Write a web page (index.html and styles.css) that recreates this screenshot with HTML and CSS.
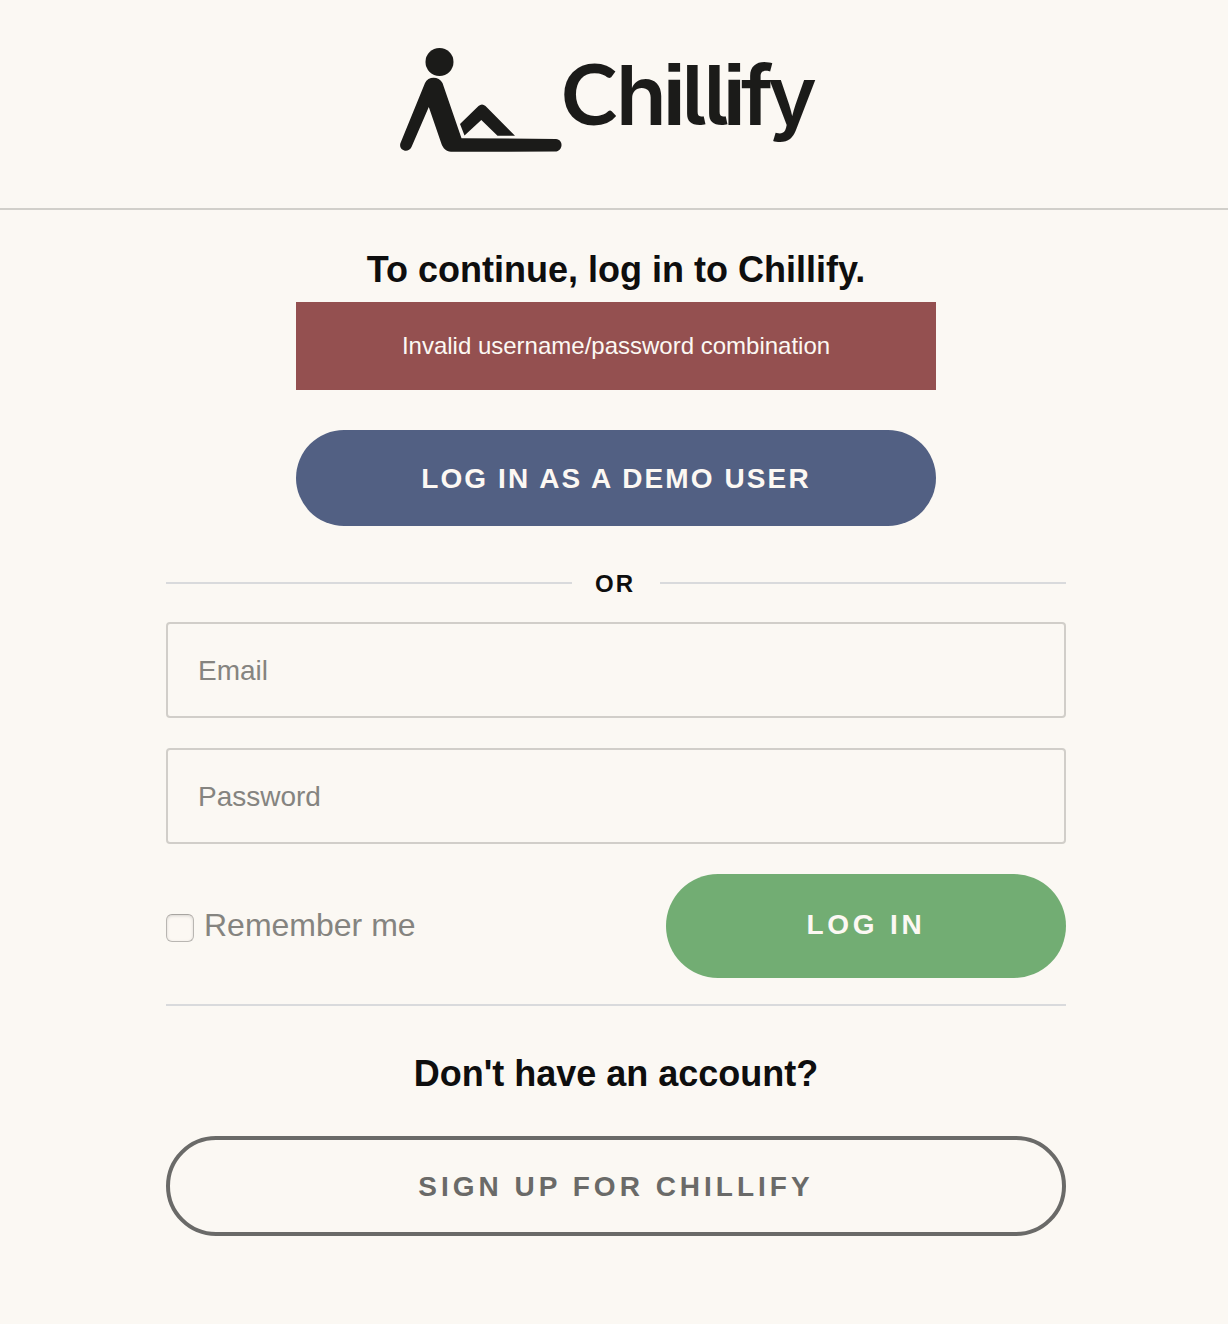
FILE: index.html
```html
<!DOCTYPE html>
<html lang="en">
<head>
<meta charset="utf-8">
<title>Log in - Chillify</title>
<link rel="stylesheet" href="styles.css">
</head>
<body>
<header class="header">
  <svg class="logo" width="432" height="120" viewBox="390 40 432 120" role="img" aria-label="Chillify">
    <circle cx="439.5" cy="62" r="14"/>
    <path d="M425 83C428 76 439 76 442.500 83L461.500 138.200L556 139C564 140 563 151 555 151.500L451 151.800C446 151.500 443 148 441.500 144L428.800 107L411.500 147C408 154 398 150 400.500 143Z"/>
    <path d="M460 124L478.500 106Q482 103 485.500 106L515 135.800H497.500L481.300 120L464.500 135.500Z"/>
    <text class="wordmark" y="125" x="561 616 662.500 681.500 703.500 722.500 741 768"><tspan class="wordmark-initial">C</tspan>h<tspan class="wordmark-i">i</tspan>ll<tspan class="wordmark-i">i</tspan>fy</text>
  </svg>
</header>
<main class="content">
  <h1 class="title">To continue, log in to Chillify.</h1>
  <div class="alert">Invalid username/password combination</div>
  <button class="button button-demo" type="button">LOG IN AS A DEMO USER</button>
  <div class="divider"><span class="divider-text">OR</span></div>
  <form class="form">
    <input class="field" type="email" placeholder="Email">
    <input class="field" type="password" placeholder="Password">
    <div class="actions">
      <label class="remember"><input class="checkbox" type="checkbox"><span class="remember-text">Remember me</span></label>
      <button class="button button-login" type="button">LOG IN</button>
    </div>
  </form>
  <h2 class="title signup-title">Don't have an account?</h2>
  <button class="button button-signup" type="button">SIGN UP FOR CHILLIFY</button>
</main>
</body>
</html>
```
FILE: styles.css
```css
* { box-sizing: border-box; }

body {
  margin: 0;
  min-height: 1324px;
  background: #fbf8f3;
  color: #0e0e0e;
  font-family: "Liberation Sans", Arial, sans-serif;
}

.header {
  height: 210px;
  padding: 40px 0 0 390px;
  border-bottom: 2px solid #d1cfca;
}

.logo { display: block; fill: #1b1b19; }

.wordmark {
  font-family: Inter, sans-serif;
  font-size: 83px;
  font-weight: 600;
  font-feature-settings: "cv05", "liga" 0, "calt" 0;
}

.wordmark-initial {
  font-family: Lato, sans-serif;
  font-size: 85px;
  font-weight: 700;
}

.wordmark-i {
  font-family: "Liberation Sans", Arial, sans-serif;
  font-size: 85px;
  font-weight: 700;
}

.content {
  display: flex;
  flex-direction: column;
  align-items: center;
  width: 900px;
  margin-left: 166px;
  padding-top: 38px;
}

.title {
  margin: 0;
  font-size: 36px;
  line-height: 44px;
}

.alert {
  width: 640px;
  margin-top: 10px;
  background: #945050;
  color: #fcf8f3;
  font-size: 24px;
  line-height: 88px;
  text-align: center;
}

.button {
  border: 0;
  padding: 0;
  border-radius: 52px;
  color: #fcf8f3;
  font: bold 28px/32px "Liberation Sans", Arial, sans-serif;
  letter-spacing: 4px;
}

.button-demo {
  width: 640px;
  height: 96px;
  margin-top: 40px;
  padding-top: 2px;
  background: #526083;
  letter-spacing: 2.1px;
}

.divider {
  display: flex;
  align-items: center;
  width: 100%;
  height: 28px;
  margin-top: 43px;
}

.divider::before,
.divider::after {
  content: "";
  flex: 1;
  height: 2px;
  background: #d9dadc;
}

.divider-text {
  width: 88px;
  padding: 2px 2px 0 0;
  font-size: 24px;
  font-weight: bold;
  line-height: 26px;
  letter-spacing: 2px;
  text-align: center;
}

.form {
  display: flex;
  flex-direction: column;
  gap: 30px;
  width: 100%;
  margin-top: 25px;
  padding-bottom: 26px;
  border-bottom: 2px solid #d9dadc;
}

.field {
  width: 100%;
  height: 96px;
  padding: 2px 30px 0;
  border: 2px solid #d1cec9;
  border-radius: 4px;
  background: transparent;
  font: 28px "Liberation Sans", Arial, sans-serif;
}

.field::placeholder { color: #858480; opacity: 1; }

.actions {
  display: flex;
  align-items: center;
  justify-content: space-between;
}

.remember {
  display: flex;
  align-items: center;
  gap: 10px;
  color: #858480;
  font-size: 32px;
  line-height: 36px;
}

.remember-text { padding-bottom: 2px; }

.checkbox {
  appearance: none;
  width: 28px;
  height: 28px;
  margin: 4px 0 0;
  border: 1px solid #b9b6b2;
  border-top-color: #a8a5a1;
  border-radius: 6px;
  background: #fcf8f3;
  box-shadow: inset 0 1px 3px #d8d5d1;
}

.button-login {
  width: 400px;
  height: 104px;
  padding-bottom: 2px;
  background: #72ad73;
  letter-spacing: 3.8px;
}

.signup-title { margin-top: 46px; }

.button-signup {
  width: 100%;
  height: 100px;
  margin-top: 40px;
  padding-top: 2px;
  border: 4px solid #6a6a68;
  background: transparent;
  color: #6a6a68;
}
```
